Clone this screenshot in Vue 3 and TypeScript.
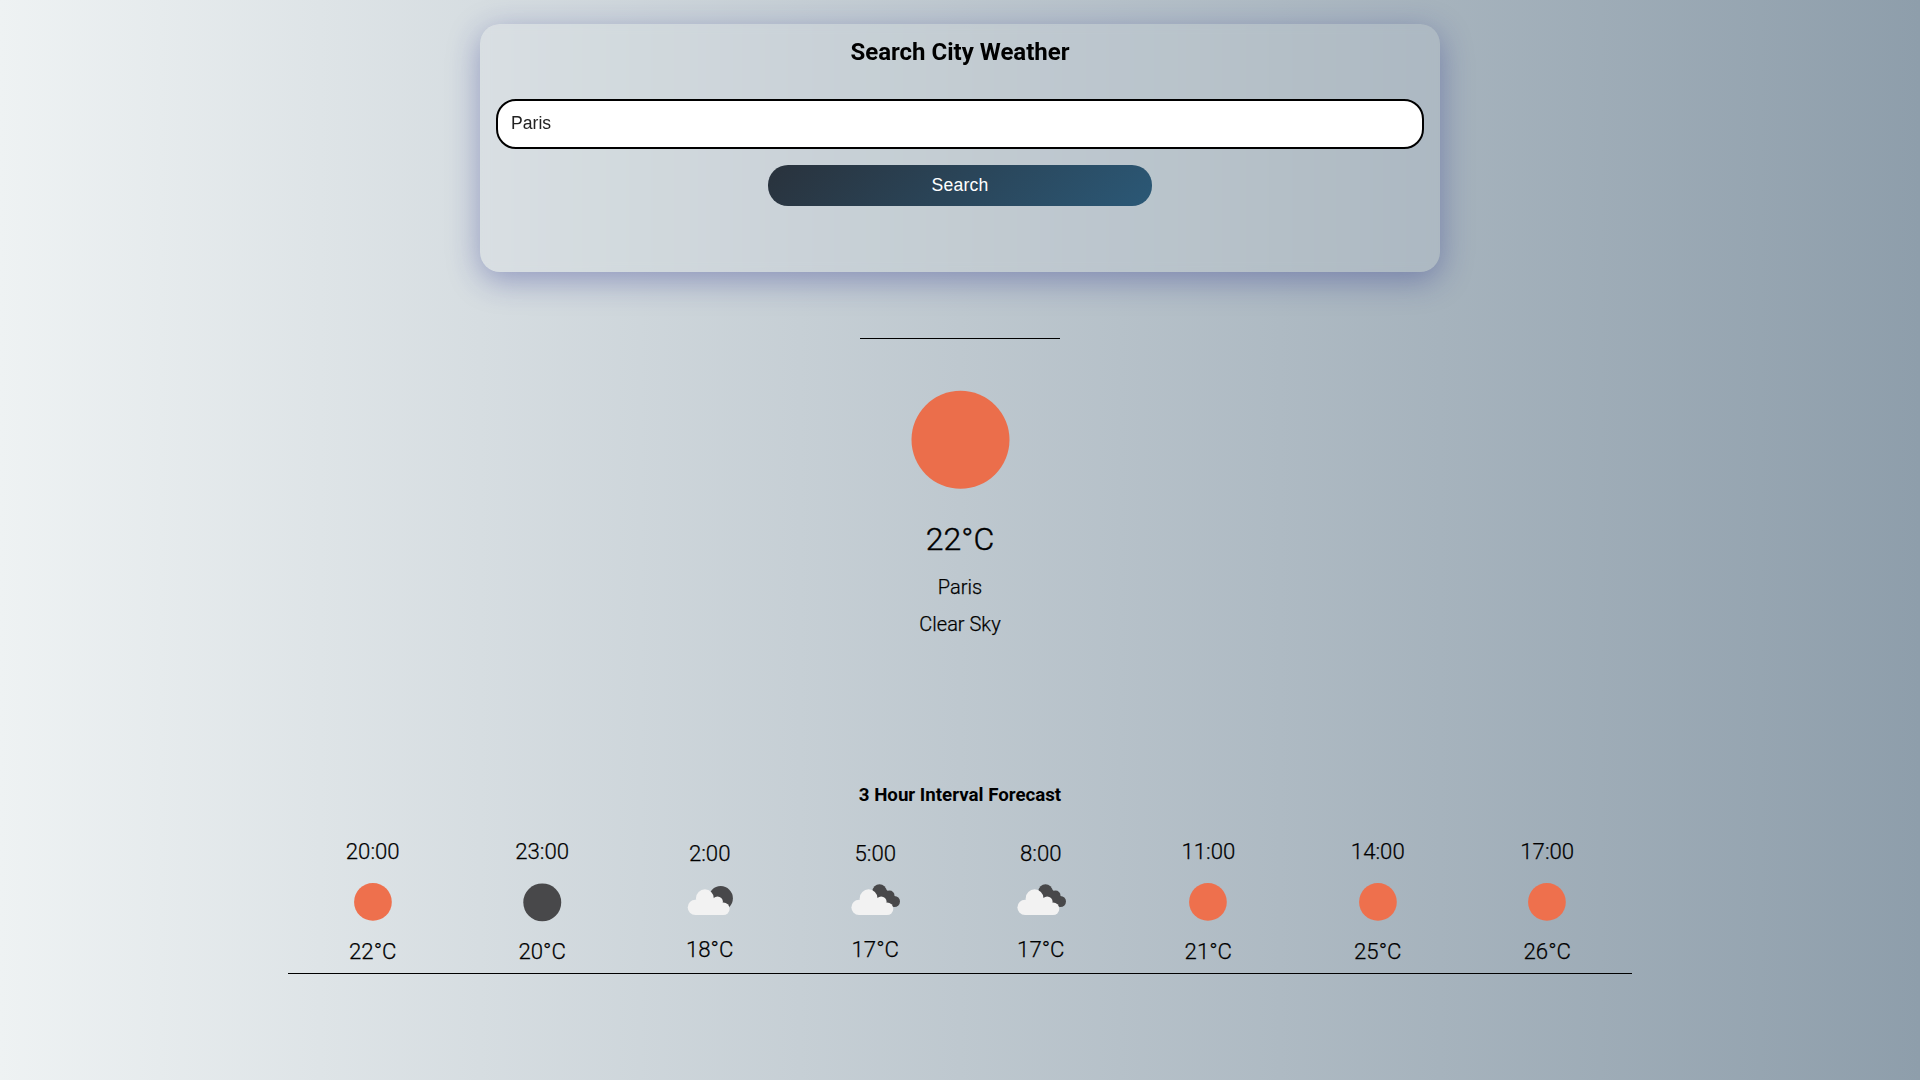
<script setup lang="ts">
import { ref } from 'vue'

type Icon = 'sun' | 'moon' | 'few' | 'broken'
interface Slot {
  time: string
  temp: number
  icon: Icon
}

const city = ref('Paris')

const slots: Slot[] = [
  { time: '20:00', temp: 22, icon: 'sun' },
  { time: '23:00', temp: 20, icon: 'moon' },
  { time: '2:00', temp: 18, icon: 'few' },
  { time: '5:00', temp: 17, icon: 'broken' },
  { time: '8:00', temp: 17, icon: 'broken' },
  { time: '11:00', temp: 21, icon: 'sun' },
  { time: '14:00', temp: 25, icon: 'sun' },
  { time: '17:00', temp: 26, icon: 'sun' },
]
</script>

<template>
  <main class="page">
    <form class="card" @submit.prevent>
      <h1 class="card-title">Search City Weather</h1>
      <input v-model="city" class="city" type="text" />
      <button class="search" type="submit">Search</button>
    </form>

    <hr class="rule" />

    <section class="current">
      <svg class="current-icon" viewBox="0 0 200 200">
        <circle cx="100.5" cy="99.8" r="49" fill="#eb6e4b" />
      </svg>
      <p class="current-temp">22°C</p>
      <p class="current-text">Paris</p>
      <p class="current-text">Clear Sky</p>
    </section>

    <section class="forecast">
      <h2 class="forecast-title">3 Hour Interval Forecast</h2>
      <div class="slots">
        <div v-for="slot in slots" :key="slot.time" class="slot">
          <p class="slot-text">{{ slot.time }}</p>
          <svg class="slot-icon" viewBox="0 0 50 50">
            <circle v-if="slot.icon === 'sun'" cx="25" cy="25" r="17.5" fill="#ee704d" />
            <circle v-else-if="slot.icon === 'moon'" cx="25.3" cy="25.4" r="17.6" fill="#48484a" />
            <template v-else>
              <circle v-if="slot.icon === 'few'" cx="35.7" cy="22.3" r="12.2" fill="#48484a" />
              <g v-else fill="#48484a">
                <circle cx="29.5" cy="15.2" r="7" />
                <circle cx="39.5" cy="19.5" r="5" />
                <circle cx="44.4" cy="25.5" r="5.6" />
                <path d="M24 17l9-6 12 10-3 9-8-3z" />
              </g>
              <g fill="#f2f2f2" :transform="slot.icon === 'few' ? 'translate(1.3 0)' : undefined">
                <circle cx="9" cy="31.4" r="7.6" />
                <circle cx="18.6" cy="22.2" r="8.9" />
                <circle cx="31.2" cy="25.8" r="5.4" />
                <circle cx="37" cy="32.7" r="6.3" />
                <path d="M9 24l9-5 10 4 9 5v11H9z" />
              </g>
            </template>
          </svg>
          <p class="slot-text">{{ slot.temp }}°C</p>
        </div>
      </div>
    </section>
  </main>
</template>

<style>
body {
  margin: 0;
}
</style>

<style scoped>
.page {
  box-sizing: border-box;
  height: 100vh;
  padding-top: 24px;
  overflow: hidden;
  display: flex;
  flex-direction: column;
  align-items: center;
  background: linear-gradient(to right, #eef2f3, #8e9eab);
  color: #000;
  font-family: Roboto, sans-serif;
  font-weight: 400;
}

h1,
h2,
p {
  margin: 0;
}

.card {
  box-sizing: border-box;
  width: 960px;
  height: 248px;
  padding: 14px 16px 0;
  display: flex;
  flex-direction: column;
  align-items: center;
  border-radius: 20px;
  background: rgba(255, 255, 255, 0.08);
  box-shadow: 0 8px 32px 0 rgba(31, 38, 135, 0.37);
  backdrop-filter: blur(4px);
}

.card-title {
  font-size: 24px;
  line-height: 28px;
  font-weight: 700;
}

.city {
  box-sizing: border-box;
  width: 100%;
  height: 50px;
  margin-top: 33px;
  padding: 0 13px 2px;
  border: 2px solid #000;
  border-radius: 20px;
  outline: none;
  background: #fff;
  color: #222;
  font-family: 'Liberation Sans', Arial, sans-serif;
  font-size: 17.6px;
}

.search {
  width: 384px;
  height: 41px;
  margin-top: 16px;
  padding: 0 0 1px;
  border: none;
  border-radius: 20px;
  background: linear-gradient(135deg, #29323c, #2b5876);
  color: #fff;
  font-family: 'Liberation Sans', Arial, sans-serif;
  font-size: 17.6px;
  letter-spacing: 0.2px;
}

.rule {
  width: 200px;
  height: 1px;
  margin: 66px 0 0;
  border: none;
  background: #000;
  flex: none;
}

.current {
  display: flex;
  flex-direction: column;
  align-items: center;
}

.current-icon {
  width: 200px;
  height: 200px;
  margin-top: 1px;
}

.current-temp {
  font-size: 32px;
  line-height: 38px;
  margin-top: -20px;
  font-weight: 300;
  -webkit-text-stroke: 0.4px #000;
}

.current-text {
  height: 23px;
  margin-top: 14px;
  font-size: 20px;
  line-height: 23px;
  font-weight: 300;
  -webkit-text-stroke: 0.25px #000;
}

.current-temp + .current-text {
  margin-top: 18px;
}

.forecast {
  width: 1344px;
  height: 189px;
  margin-top: 148px;
  border-bottom: 1px solid #000;
  display: flex;
  flex-direction: column;
}

.forecast-title {
  font-size: 18.7px;
  line-height: 22px;
  font-weight: 700;
  text-align: center;
}

.slots {
  margin-top: 32px;
  display: flex;
  justify-content: space-around;
  align-items: center;
}

.slot {
  min-width: 50px;
  display: flex;
  flex-direction: column;
  align-items: center;
}

.slot-text {
  font-size: 22.2px;
  line-height: 26px;
  font-weight: 300;
  -webkit-text-stroke: 0.25px #000;
}

.slot-icon {
  width: 0;
  min-width: 100%;
  aspect-ratio: 1;
  margin: 10.5px 0 10px;
}
</style>
